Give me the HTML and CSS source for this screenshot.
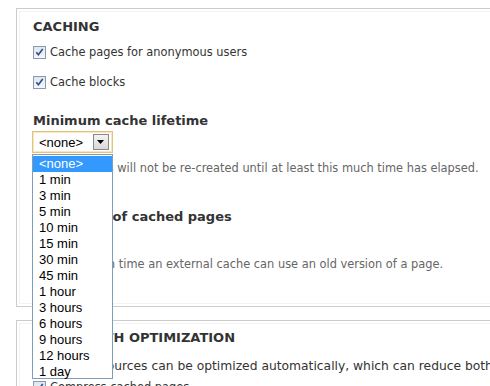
FILE: index.html
```html
<!DOCTYPE html>
<html>
<head>
<meta charset="utf-8">
<link rel="stylesheet" href="styles.css">
</head>
<body>
<div class="page">
  <section class="panel panel-first">
    <h2 class="panel-title">CACHING</h2>
    <label class="check">
      <span class="box"><svg width="12" height="12" viewBox="0 0 12 12"><path d="M2.5 6.2 L4.8 9 L9.5 2.8" fill="none" stroke="#2b4f8c" stroke-width="1.8"/></svg></span>
      Cache pages for anonymous users
    </label>
    <label class="check check-second">
      <span class="box"><svg width="12" height="12" viewBox="0 0 12 12"><path d="M2.5 6.2 L4.8 9 L9.5 2.8" fill="none" stroke="#2b4f8c" stroke-width="1.8"/></svg></span>
      Cache blocks
    </label>
    <div class="field">
      <div class="field-label">Minimum cache lifetime</div>
      <div class="select-wrap">
        <div class="select select-focus"><span class="select-value">&lt;none&gt;</span><span class="arrow"><svg width="8" height="5" viewBox="0 0 8 5"><path d="M0 0 H7 L3.5 4 Z" fill="#000"/></svg></span></div>
        <ul class="dropdown">
          <li class="selected">&lt;none&gt;</li>
          <li>1 min</li>
          <li>3 min</li>
          <li>5 min</li>
          <li>10 min</li>
          <li>15 min</li>
          <li>30 min</li>
          <li>45 min</li>
          <li>1 hour</li>
          <li>3 hours</li>
          <li>6 hours</li>
          <li>9 hours</li>
          <li>12 hours</li>
          <li>1 day</li>
        </ul>
      </div>
      <div class="desc">Cached pages will not be re-created until at least this much time has elapsed.</div>
    </div>
    <div class="field field-second">
      <div class="field-label">Expiration of cached pages</div>
      <div class="select"><span class="select-value">&lt;none&gt;</span><span class="arrow"><svg width="8" height="5" viewBox="0 0 8 5"><path d="M0 0 H7 L3.5 4 Z" fill="#000"/></svg></span></div>
      <div class="desc">The maximum time an external cache can use an old version of a page.</div>
    </div>
  </section>
  <section class="panel panel-second">
    <h2 class="panel-title">BANDWIDTH OPTIMIZATION</h2>
    <div class="desc desc-wide">External resources can be optimized automatically, which can reduce both the size and number of requests made to your website.</div>
    <label class="check check-tight">
      <span class="box"><svg width="12" height="12" viewBox="0 0 12 12"><path d="M2.5 6.2 L4.8 9 L9.5 2.8" fill="none" stroke="#2b4f8c" stroke-width="1.8"/></svg></span>
      Compress cached pages
    </label>
  </section>
</div>
</body>
</html>
```
FILE: styles.css
```css
html, body {
  margin: 0;
  padding: 0;
  background: #fff;
  overflow: hidden;
}
body {
  font-family: "DejaVu Sans", Verdana, sans-serif;
  font-size: 11.4px;
  color: #333;
  width: 490px;
  height: 386px;
}
.page {
  padding: 8px 0 0 16px;
  width: 700px;
}
.panel {
  border: 1px solid #ccc;
  box-shadow: inset 0 0 0 2px #fff, inset 0 0 0 3px #f3f3f3;
  padding: 9px 16px 33px 16px;
  width: 660px;
}
.panel-second {
  margin-top: 13px;
  padding-top: 8px;
}
.panel-title {
  margin: 0;
  font-size: 13px;
  line-height: 18px;
  font-weight: bold;
  color: #333;
}
.check {
  display: flex;
  align-items: center;
  gap: 4px;
  height: 18px;
  line-height: 18px;
  margin-top: 7px;
  color: #333;
}
.check-second {
  margin-top: 12px;
}
.check-tight {
  margin-top: 3px;
}
.box {
  width: 11px;
  height: 11px;
  border: 1px solid #8e9aab;
  background: linear-gradient(#dfe6ef, #f4f7fb);
  display: flex;
  align-items: center;
  justify-content: center;
  flex: none;
}
.box svg {
  display: block;
}
.field {
  margin-top: 21px;
}
.field-second {
  margin-top: 31px;
}
.field-label {
  font-weight: bold;
  font-size: 13px;
  line-height: 18px;
  color: #333;
}
.select-wrap {
  position: relative;
}
.select {
  margin-top: 1px;
  margin-left: -1px;
  height: 22px;
  box-sizing: border-box;
  border: 1px solid #bbb;
  display: flex;
  align-items: center;
  justify-content: space-between;
  padding: 0 3px 0 6px;
  background: #fff;
  font-family: "Liberation Sans", Arial, sans-serif;
  font-size: 13px;
  color: #000;
  width: 81px;
}
.select-focus {
  border: 1px solid #e3c27e;
  box-shadow: inset 0 0 0 1px #f6e6c4;
}
.arrow {
  width: 16px;
  height: 16px;
  box-sizing: border-box;
  border: 1px solid #888;
  background: linear-gradient(#f4f4f4, #d8d8d8);
  display: flex;
  align-items: center;
  justify-content: center;
}
.arrow svg {
  display: block;
}
.dropdown {
  position: absolute;
  top: 23px;
  left: -1px;
  width: 81px;
  box-sizing: border-box;
  margin: 0;
  padding: 1px 0 0 0;
  list-style: none;
  border: 1px solid #7f9db9;
  background: #fff;
  font-family: "Liberation Sans", Arial, sans-serif;
  font-size: 13px;
  color: #000;
  z-index: 5;
  height: 225px;
}
.dropdown li {
  height: 16px;
  line-height: 16px;
  padding-left: 6px;
}
.dropdown li.selected {
  background: #3399ff;
  color: #fff;
}
.desc {
  margin-top: 6px;
  line-height: 18px;
  color: #666;
  white-space: nowrap;
}
.desc-wide {
  margin-top: 10px;
  font-size: 12.3px;
  color: #333;
}
```
